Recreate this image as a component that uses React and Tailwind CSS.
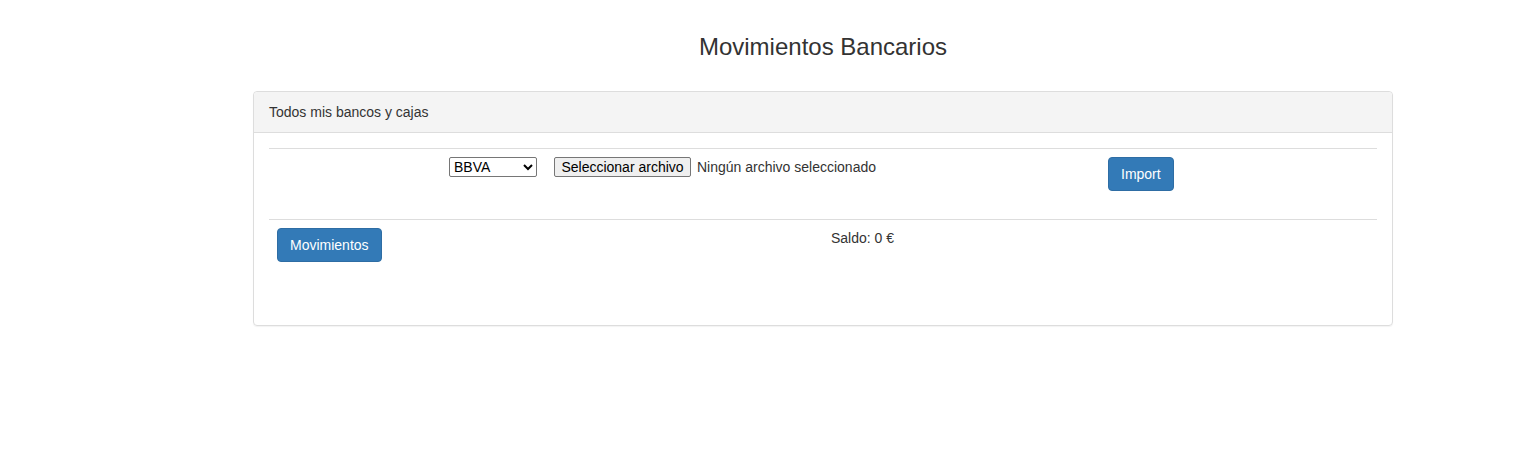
export default function App() {
  return (
    <div className="min-h-screen bg-white text-[14px] leading-[20px] text-[#333] font-['Liberation_Sans',Arial,sans-serif]">
      <div className="ml-[253px] w-[1140px]">
        <h2 className="pt-[34px] text-center text-[24px] leading-[26px] font-normal">Movimientos Bancarios</h2>

        <div className="mt-[31px] rounded-[4px] border border-[#ddd] shadow-[0_1px_1px_rgba(0,0,0,0.05)]">
          <div className="h-[41px] rounded-t-[4px] border-b border-[#ddd] bg-[#f4f4f4] px-[15px] py-[10px]">
            Todos mis bancos y cajas
          </div>

          <div className="p-[15px]">
            <div className="mb-[20px]">
              {/* fila de importación */}
              <div className="flex h-[71px] border-t border-[#ddd] pt-[8px]">
                <div className="flex w-[839px] items-start pl-[180px]">
                  <select className="h-[20px] w-[88px] rounded-[2px] border border-[#767676] bg-white text-[14px] leading-[16px] text-black">
                    <option>BBVA</option>
                    <option>Santander</option>
                    <option>CaixaBank</option>
                  </select>
                  <div className="ml-[17px] flex items-center text-[14px] leading-[17px]">
                    <button className="h-[20px] w-[137px] rounded-[2px] border border-[#767676] bg-[#efefef] text-black">
                      Seleccionar archivo
                    </button>
                    <span className="ml-[6px] mt-[1px]">Ningún archivo seleccionado</span>
                  </div>
                </div>
                <div>
                  <button className="h-[34px] rounded-[4px] border border-[#2e6da4] bg-[#337ab7] px-[12px] text-white">
                    Import
                  </button>
                </div>
              </div>

              {/* fila de saldo */}
              <div className="flex h-[71px] border-t border-[#ddd]">
                <div className="w-[554px] p-[8px]">
                  <button className="h-[34px] rounded-[4px] border border-[#2e6da4] bg-[#337ab7] px-[12px] text-white">
                    Movimientos
                  </button>
                </div>
                <div className="p-[8px]">Saldo: 0 €</div>
              </div>
            </div>
          </div>
        </div>
      </div>
    </div>
  )
}
